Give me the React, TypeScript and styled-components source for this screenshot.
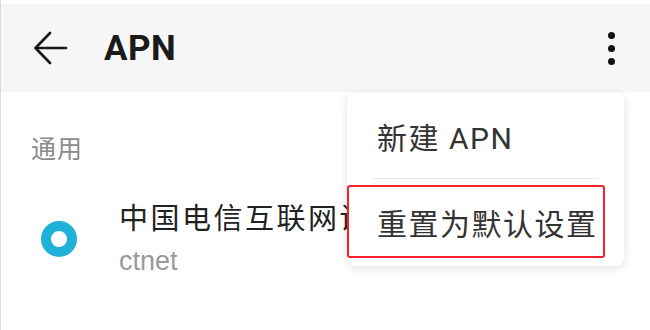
import React from 'react';
import styled, {createGlobalStyle} from "styled-components";

const GlobalStyle = createGlobalStyle`
  html, body {
    margin: 0;
    padding: 0;
    background: #ffffff;
  }
  body {
    font-family: Roboto, "Noto Sans CJK SC", "Liberation Sans", sans-serif;
  }
`;

const Screen = styled.div`
  position: relative;
  width: 650px;
  height: 330px;
  overflow: hidden;
  background: #ffffff;
  border-left: 1px solid #dcdcdc;
  box-sizing: border-box;
  padding-top: 4px;
`;

const Toolbar = styled.header`
  display: flex;
  align-items: center;
  height: 88px;
  background: #f6f6f6;
  padding: 0 0 0 33px;
`;

const BackButton = styled.svg`
  width: 34px;
  height: 34px;
  flex: none;
`;

const Title = styled.h1`
  margin: 0 0 0 36px;
  font-size: 35px;
  font-weight: 700;
  color: #1a1a1a;
  letter-spacing: 0.5px;
`;

const MoreButton = styled.div`
  margin-left: auto;
  margin-right: 35px;
  display: flex;
  flex-direction: column;
  gap: 6px;
`;

const Dot = styled.span`
  width: 7px;
  height: 7px;
  border-radius: 50%;
  background: #111;
`;

const SectionLabel = styled.div`
  padding: 41px 0 0 30px;
  font-size: 25px;
  line-height: 34px;
  letter-spacing: 1px;
  color: #8a8a8a;
`;

const ApnRow = styled.div`
  display: flex;
  align-items: center;
  padding: 32px 0 0 40px;
`;

const Radio = styled.span`
  flex: none;
  width: 16px;
  height: 16px;
  border-radius: 50%;
  border: 10px solid #1fb1da;
`;

const ApnText = styled.div`
  margin-left: 42px;
  display: flex;
  flex-direction: column;
  gap: 5px;
`;

const ApnName = styled.div`
  font-size: 29px;
  line-height: 40px;
  letter-spacing: 2.5px;
  color: #222;
  white-space: nowrap;
`;

const ApnValue = styled.div`
  font-family: "Liberation Sans", Arial, sans-serif;
  font-size: 27px;
  line-height: 34px;
  color: #999;
`;

const Menu = styled.div`
  position: absolute;
  left: 346px;
  top: 93px;
  width: 277px;
  height: 173px;
  background: #ffffff;
  border-radius: 8px;
  box-shadow: 0 2px 10px rgba(0, 0, 0, 0.12);
  display: flex;
  flex-direction: column;
`;

const MenuItem = styled.div`
  height: 85px;
  display: flex;
  align-items: center;
  padding-left: 30px;
  font-size: 30px;
  letter-spacing: 1.5px;
  color: #333;
`;

const Divider = styled.div`
  height: 1px;
  margin: 0 26px;
  background: #e6e6e6;
`;

const HighlightSlot = styled.div`
  padding-top: 6px;
`;

const Highlight = styled.div`
  width: 258px;
  height: 73px;
  box-sizing: border-box;
  border: 2px solid #f5222d;
  border-radius: 3px;
  display: flex;
  align-items: center;
  padding-left: 28px;
  font-size: 30px;
  letter-spacing: 1.5px;
  color: #333;
`;

export default function App() {
    return <>
        <GlobalStyle/>
        <Screen>
            <Toolbar>
                <BackButton viewBox="0 0 34 34" fill="none" stroke="#1a1a1a" strokeWidth="2.6"
                            strokeLinecap="round" strokeLinejoin="round">
                    <path d="M32 17H2"/>
                    <path d="M16 2L1.5 17L16 32"/>
                </BackButton>
                <Title>APN</Title>
                <MoreButton>
                    <Dot/>
                    <Dot/>
                    <Dot/>
                </MoreButton>
            </Toolbar>
            <SectionLabel>通用</SectionLabel>
            <ApnRow>
                <Radio/>
                <ApnText>
                    <ApnName>中国电信互联网设置</ApnName>
                    <ApnValue>ctnet</ApnValue>
                </ApnText>
            </ApnRow>
            <Menu>
                <MenuItem>新建 APN</MenuItem>
                <Divider/>
                <HighlightSlot>
                    <Highlight>重置为默认设置</Highlight>
                </HighlightSlot>
            </Menu>
        </Screen>
    </>;
}
